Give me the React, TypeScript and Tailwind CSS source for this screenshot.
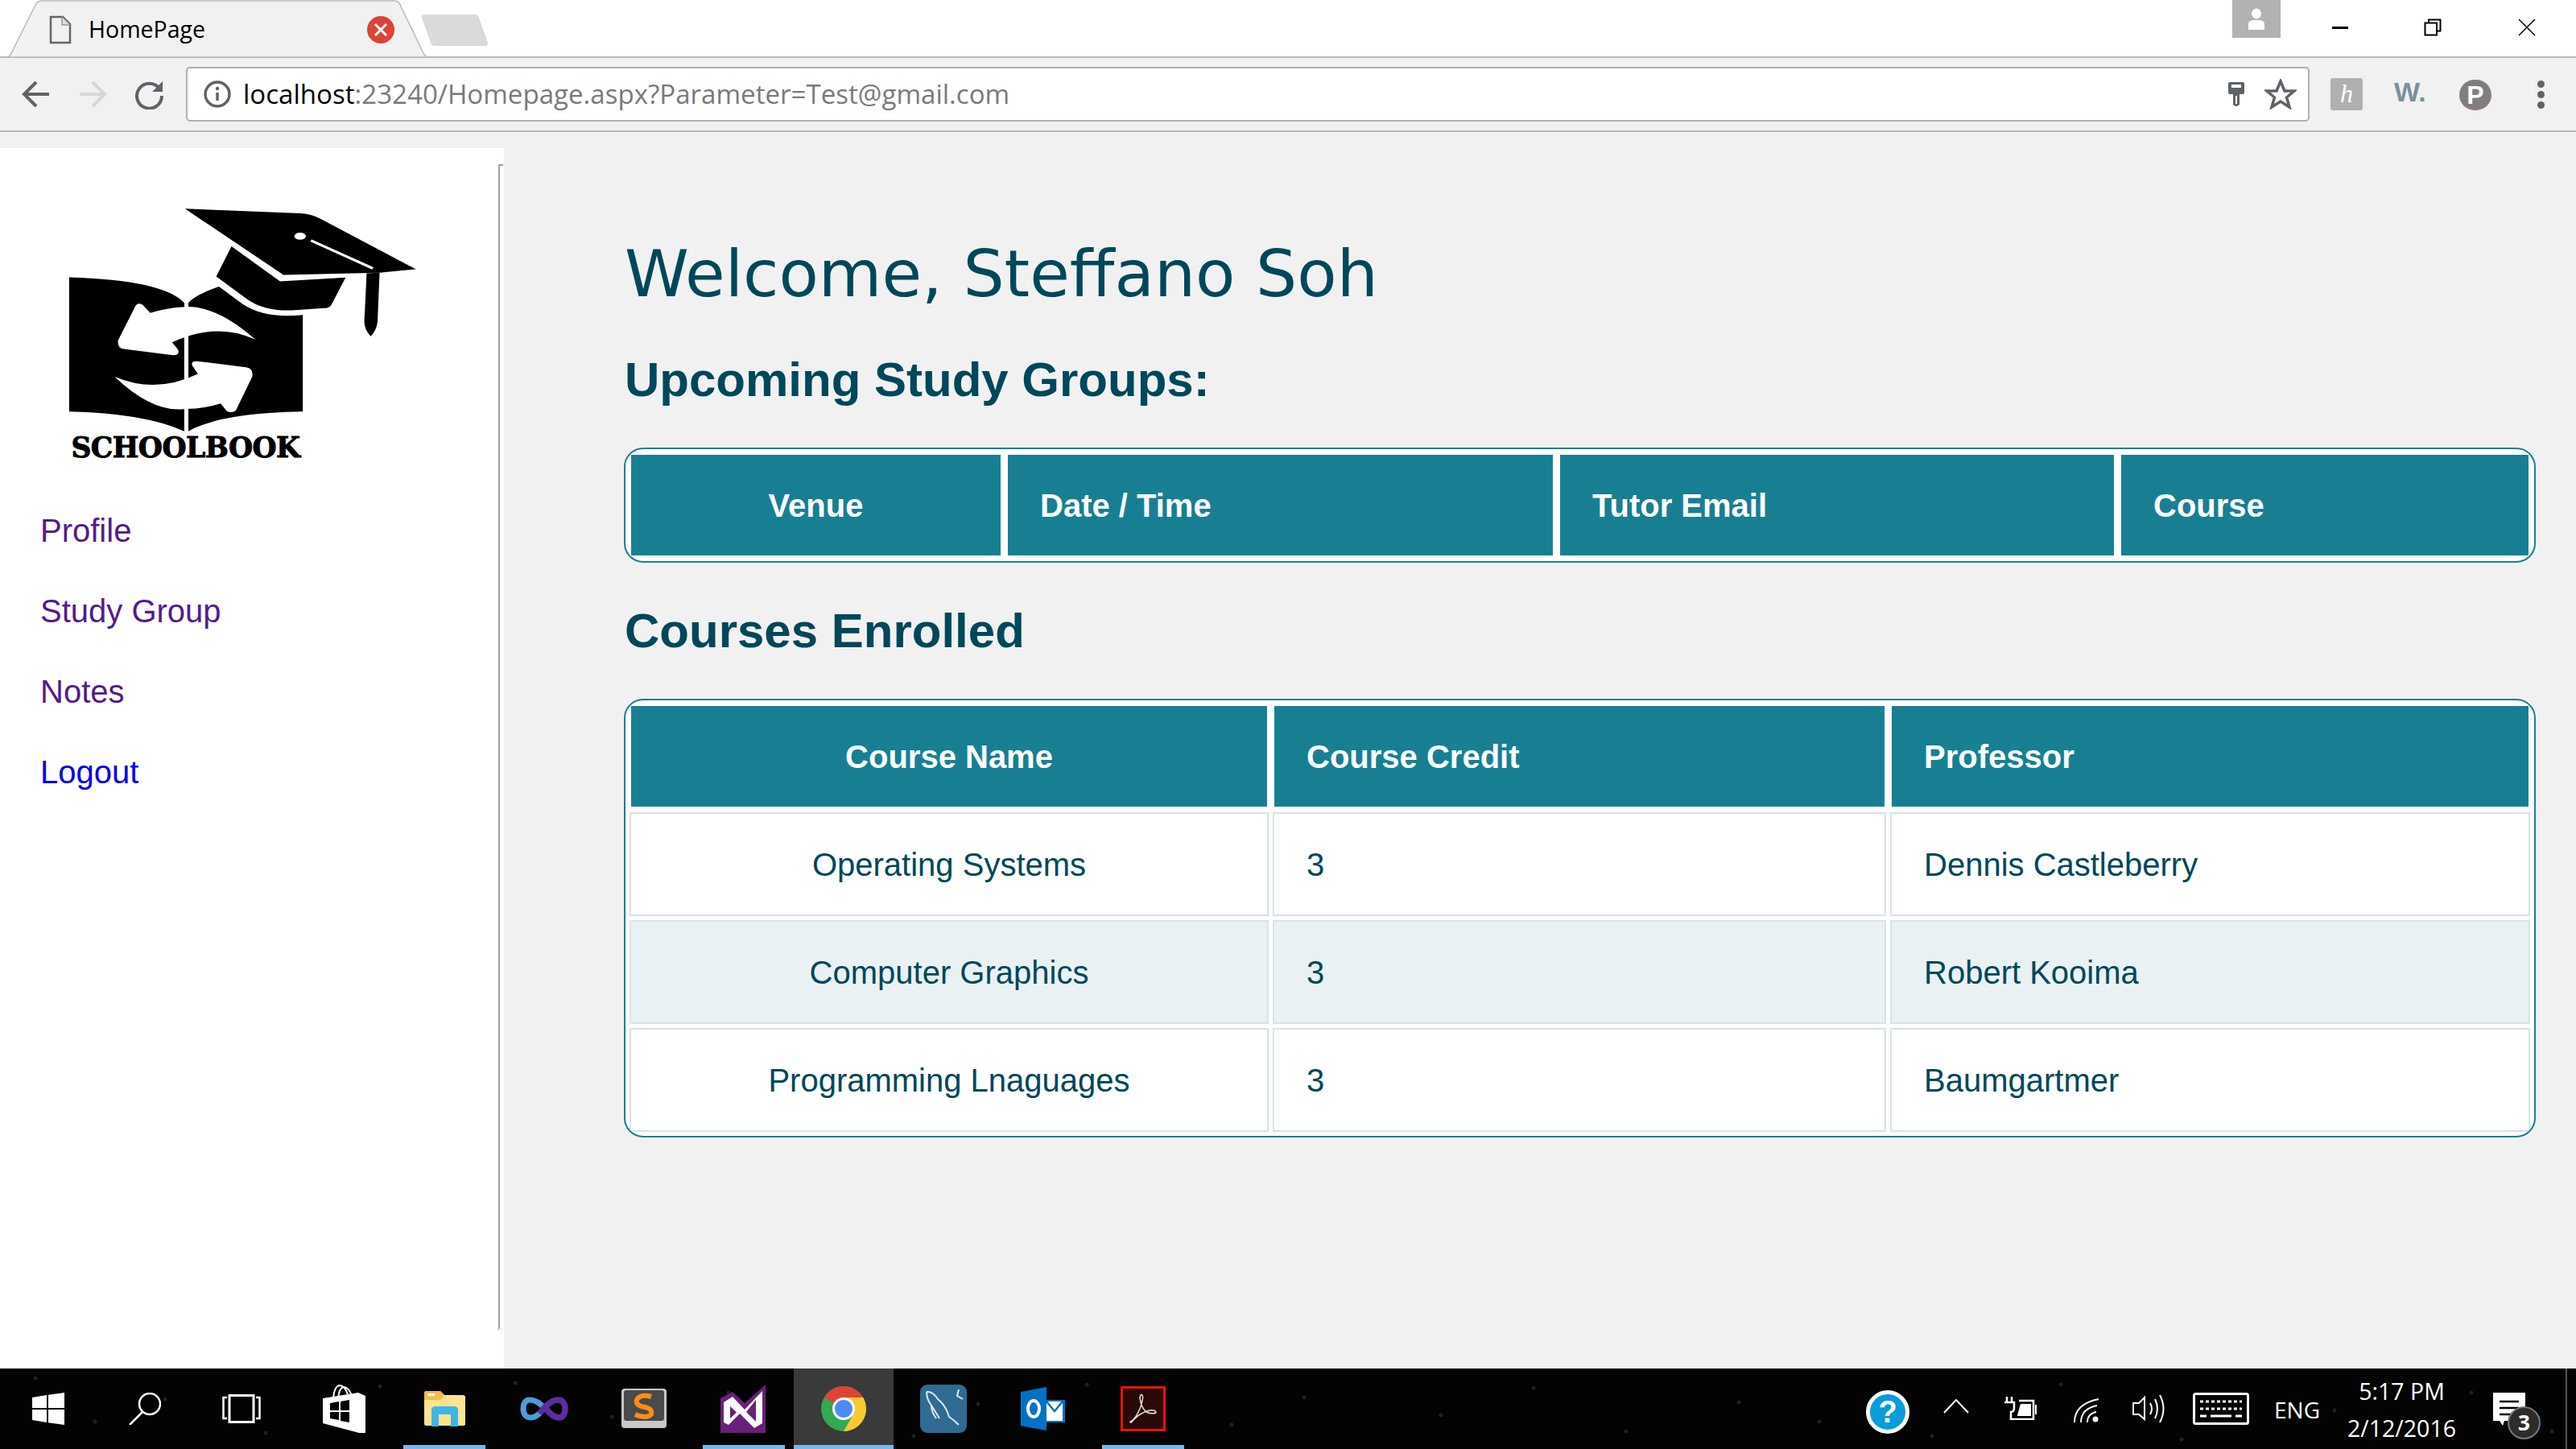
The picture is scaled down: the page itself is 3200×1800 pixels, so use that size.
const sans = "font-['Liberation_Sans',Arial,sans-serif]";

const groupCols = ["w-[463px]", "w-[681px]", "w-[692px]", "w-[510px]"];
const courseCols = ["w-[794px]", "w-[762px]", "w-[795px]"];

const courses = [
  { name: "Operating Systems", credit: "3", prof: "Dennis Castleberry" },
  { name: "Computer Graphics", credit: "3", prof: "Robert Kooima" },
  { name: "Programming Lnaguages", credit: "3", prof: "Baumgartmer" },
];

const stars = [
  [44, 12], [118, 66], [205, 38], [330, 80], [472, 22], [560, 72], [640, 18], [760, 60], [905, 30], [1135, 84],
  [1215, 44], [1350, 20], [1530, 70], [1620, 36], [1790, 58], [1905, 24], [2020, 78], [2160, 42], [2260, 66],
  [2400, 84], [2560, 20], [2710, 88], [2900, 52], [3070, 30], [3170, 78],
];

function Th({ children, center }: { children: string; center?: boolean }) {
  return (
    <th className={`h-[129px] p-0 px-10 border-2 border-white bg-[#187f93] text-white text-[40px] font-bold ${center ? "text-center" : "text-left"}`}>
      {children}
    </th>
  );
}

function Logo() {
  return (
    <svg width="443" height="282" viewBox="190 230 1050 845" preserveAspectRatio="none" className="block">
      <path d="M545 240 L885 257 Q920 260 945 278 L1225 465 L1118 478 L835 486 Z" fill="#000" />
      <path d="M916 358 L1098 462" stroke="#fff" strokeWidth="9" />
      <ellipse cx="884" cy="342" rx="17" ry="13" fill="#fff" />
      <path d="M1080 480 L1118 478 L1112 660 Q1110 690 1092 715 Q1073 690 1073 660 Z" fill="#000" />
      <path d="M682 380 L825 510 L1018 496 L975 600 Q968 610 955 610 L860 618 Q780 622 730 578 L637 492 Z" fill="#000" />
      <path d="M204 495 Q480 505 543 590 L543 1068 Q420 1000 204 995 Z" fill="#000" />
      <path d="M555 590 Q575 560 645 530 L715 595 Q780 650 892 635 L892 995 Q650 1000 555 1068 Z" fill="#000" />
      <path d="M752 727 Q640 600 545 605 Q490 608 443 628 L420 597 Q408 588 400 600 L348 730 Q345 758 365 762 L510 785 Q530 785 525 765 L507 737 Q640 660 752 727 Z" fill="#fff" />
      <path d="M338 865 Q450 1000 545 985 Q600 985 650 965 L668 993 Q685 1003 695 990 L743 865 Q748 835 725 830 L585 808 Q560 805 567 825 L583 855 Q460 930 338 865 Z" fill="#fff" />
      <path d="M543 720 H555 V1068 H543 Z" fill="#fff" />
    </svg>
  );
}

function Slot({ children, w = "w-[124px]", line, active, ml }: { children: React.ReactNode; w?: string; line?: boolean; active?: boolean; ml?: string }) {
  return (
    <div className={`relative h-full flex items-center justify-center ${w} ${ml ?? ""} ${active ? "bg-[#3a3a3a]" : ""}`}>
      {children}
      {line && <div className={`absolute bottom-0 h-[5px] bg-[#76b9ed] ${active ? "left-0 right-0" : "left-[11px] right-[11px]"}`} />}
    </div>
  );
}

export default function App() {
  return (
    <div className="w-[3200px] h-[1800px] flex flex-col overflow-hidden bg-[#f1f1f1]">
      {/* tab strip */}
      <div className="relative h-[72px] bg-white border-b-2 border-[#b8b8b8] shrink-0">
        <svg width="620" height="72" className="absolute left-0 top-0">
          <path d="M8 71 Q12 71 14 66 L43 8 Q46 1 52 1 L490 1 Q496 1 498 8 L526 66 Q528 71 534 71 Z" fill="#f1f1f1" stroke="#b8b8b8" strokeWidth="1.5" />
          <path d="M527 18 L590 18 Q594 18 595 22 L606 53 Q607 57 603 57 L540 57 Q536 57 535 53 L524 22 Q523 18 527 18 Z" fill="#dadada" />
          <path d="M63 21 H78 L87 30 V53 H63 Z" fill="none" stroke="#666" strokeWidth="2.5" />
          <path d="M77 21 V31 H87" fill="#ddd" stroke="#999" strokeWidth="1.5" />
          <circle cx="473" cy="37" r="17" fill="#db4437" />
          <path d="M466 30 L480 44 M480 30 L466 44" stroke="#fff" strokeWidth="3" />
        </svg>
        <span className="absolute left-[110px] top-[16px] text-[28.5px] leading-[40px] text-black font-['Open_Sans',sans-serif]">HomePage</span>
        <div className="absolute left-[2773px] top-0 w-[60px] h-[47px] bg-[#b2b2b2] flex items-center justify-center">
          <svg width="24" height="32" viewBox="0 0 24 32">
            <ellipse cx="12" cy="9" rx="6" ry="6.5" fill="#fff" />
            <path d="M2 29 V22 Q2 18 8 17 H16 Q22 18 22 22 V29 Z" fill="#fff" />
          </svg>
        </div>
        <div className="absolute left-[2897px] top-[33px] w-[20px] h-[3px] bg-black" />
        <svg width="22" height="22" className="absolute left-[3011px] top-[23px]">
          <path d="M6 5 V1.5 H20.5 V15.5 H16 M1.5 5.5 H16 V20.5 H1.5 Z" fill="none" stroke="#000" strokeWidth="2" />
        </svg>
        <svg width="22" height="22" className="absolute left-[3128px] top-[23px]">
          <path d="M1 1 L21 21 M21 1 L1 21" stroke="#000" strokeWidth="1.5" />
        </svg>
      </div>

      {/* toolbar */}
      <div className="h-[92px] bg-[#f1f1f1] border-b-2 border-[#b8b8b8] flex items-center shrink-0">
        <div className="w-[231px] flex items-center shrink-0">
          <svg width="36" height="36" viewBox="0 0 36 36" className="ml-[27px]">
            <path d="M34 18 H4 M18 3 L3 18 L18 33" fill="none" stroke="#5f6368" strokeWidth="4" />
          </svg>
          <svg width="36" height="36" viewBox="0 0 36 36" className="ml-[34px]">
            <path d="M2 18 H32 M18 3 L33 18 L18 33" fill="none" stroke="#d6d6d6" strokeWidth="4" />
          </svg>
          <svg width="38" height="38" viewBox="0 0 38 38" className="ml-[34px]">
            <path d="M31 12 A15.5 15.5 0 1 0 34 21" fill="none" stroke="#5f6368" strokeWidth="4" />
            <path d="M35 3 V16 H22 Z" fill="#5f6368" />
          </svg>
        </div>
        <div className="w-[2638px] h-[68px] bg-white border-2 border-[#b0b0b0] rounded-[5px] flex items-center shrink-0 pl-[19px] pr-[14px]">
          <svg width="36" height="36" viewBox="0 0 36 36" className="shrink-0">
            <circle cx="18" cy="18" r="15" fill="none" stroke="#5f6368" strokeWidth="3.5" />
            <path d="M18 16 V26" stroke="#5f6368" strokeWidth="3.5" />
            <circle cx="18" cy="11" r="2.2" fill="#5f6368" />
          </svg>
          <div className="ml-[14px] text-[33.1px] leading-[44px] text-[#7a7a7a] font-['Open_Sans',sans-serif] whitespace-nowrap flex-1">
            <span className="text-black">localhost</span>:23240/Homepage.aspx?Parameter=Test@gmail.com
          </div>
          <svg width="22" height="32" viewBox="0 0 22 32" className="shrink-0 ml-[2px]">
            <path d="M3 1 H19 Q21 1 21 3 V14 Q21 16 19 16 H15 V29 Q11 33 7 29 V16 H3 Q1 16 1 14 V3 Q1 1 3 1 Z" fill="#5f6368" />
            <rect x="5" y="4" width="12" height="4" fill="#fff" />
            <rect x="10" y="18" width="2" height="10" fill="#fff" />
          </svg>
          <svg width="40" height="38" viewBox="0 0 40 38" className="ml-[24px] shrink-0">
            <path d="M20 3 L25 15 L37 15 L27.5 23 L31 35 L20 28 L9 35 L12.5 23 L3 15 L15 15 Z" fill="none" stroke="#5f6368" strokeWidth="3.5" />
          </svg>
        </div>
        <div className="relative flex-1 h-full">
          <div className="absolute left-[26px] top-[25px] w-[40px] h-[40px] rounded-[3px] bg-[#b0b0b0] text-white text-[32px] leading-[38px] text-center italic font-['Liberation_Serif',serif]">h</div>
          <span className="absolute left-[105px] top-[22px] text-[34px] leading-[40px] font-bold text-[#7a909f] font-['Liberation_Sans',sans-serif]">W.</span>
          <div className="absolute left-[186px] top-[27px] w-[40px] h-[38px] rounded-full bg-[#7f7f7f] border-b border-[#c8608c] text-white text-[32px] leading-[38px] text-center font-bold font-['Liberation_Sans',sans-serif]">P</div>
          <div className="absolute left-[283px] top-[28px] flex flex-col gap-[4px]">
            <div className="w-[9px] h-[9px] rounded-full bg-[#5f6368]" />
            <div className="w-[9px] h-[9px] rounded-full bg-[#5f6368]" />
            <div className="w-[9px] h-[9px] rounded-full bg-[#5f6368]" />
          </div>
        </div>
      </div>

      {/* page */}
      <div className={`flex-1 min-h-0 pt-[20px] flex ${sans}`}>
        <aside className="w-[626px] bg-white pt-[20px] shrink-0">
          <div className="w-[621px] h-[1448px] border-r-2 border-[#a0a0a0] pt-[52px] pl-[80px] relative">
            <div className="absolute right-[-6px] top-0 w-[5px] h-[2px] bg-[#a0a0a0]" />
            <div className="absolute right-[-6px] bottom-0 w-[5px] h-[2px] bg-[#ececec]" />
            <Logo />
            <div className="-ml-[80px] w-[461px] text-center text-[34.5px] leading-[34px] mt-[1px] font-bold text-black font-['DejaVu_Serif',serif] [-webkit-text-stroke:1px_#000] tracking-[-0.5px]">
              SCHOOLBOOK
            </div>
            <nav className="-ml-[30px] mt-[63px] flex flex-col gap-[54px] text-[40px] leading-[46px]">
              <a className="text-[#551a8b]">Profile</a>
              <a className="text-[#551a8b]">Study Group</a>
              <a className="text-[#551a8b]">Notes</a>
              <a className="text-[#0000ee]">Logout</a>
            </nav>
          </div>
        </aside>

        <main className="flex-1 pl-[150px] pr-[50px] text-[#00475a]">
          <h1 className="mt-[108px] text-[80.7px] leading-[96px] font-['DejaVu_Sans',Verdana,sans-serif]">Welcome, Steffano Soh</h1>
          <h2 className="mt-[49px] text-[60px] leading-[70px] font-bold">Upcoming Study Groups:</h2>
          <div className="mt-[49px] -ml-[1px] rounded-[24px] border-2 border-[#187f93] bg-white overflow-hidden">
            <table className="table-fixed w-full border-separate border-spacing-[5px]">
              <colgroup>
                {groupCols.map((c) => <col key={c} className={c} />)}
              </colgroup>
              <thead>
                <tr>
                  <Th center>Venue</Th>
                  <Th>Date / Time</Th>
                  <Th>Tutor Email</Th>
                  <Th>Course</Th>
                </tr>
              </thead>
            </table>
          </div>
          <h2 className="mt-[50px] text-[60px] leading-[70px] font-bold">Courses Enrolled</h2>
          <div className="mt-[49px] -ml-[1px] rounded-[24px] border-2 border-[#187f93] bg-white overflow-hidden">
            <table className="table-fixed w-full border-separate border-spacing-[5px]">
              <colgroup>
                {courseCols.map((c) => <col key={c} className={c} />)}
              </colgroup>
              <thead>
                <tr>
                  <Th center>Course Name</Th>
                  <Th>Course Credit</Th>
                  <Th>Professor</Th>
                </tr>
              </thead>
              <tbody className="text-[40px]">
                {courses.map((c, i) => (
                  <tr key={c.name} className={i === 1 ? "bg-[#e9f1f3]" : ""}>
                    <td className="h-[129px] p-0 border-2 border-[#d8e4e6] text-center">{c.name}</td>
                    <td className="h-[129px] p-0 px-10 border-2 border-[#d8e4e6]">{c.credit}</td>
                    <td className="h-[129px] p-0 px-10 border-2 border-[#d8e4e6]">{c.prof}</td>
                  </tr>
                ))}
              </tbody>
            </table>
          </div>
        </main>
      </div>

      {/* taskbar */}
      <div className="relative h-[100px] bg-[#030303] shrink-0 flex font-['Open_Sans',sans-serif] text-white">
        <svg width="3200" height="100" className="absolute left-0 top-0">
          {stars.map(([x, y]) => <circle key={x} cx={x} cy={y} r="2.5" fill="#1c2226" />)}
        </svg>
        <Slot w="w-[120px]">
          <svg width="40" height="40" viewBox="0 0 40 40" className="relative">
            <path d="M0 6 L18 3 V19 H0 Z M20 2.7 L40 0 V19 H20 Z M0 21 H18 V37 L0 34 Z M20 21 H40 V40 L20 37.3 Z" fill="#fff" />
          </svg>
        </Slot>
        <Slot w="w-[120px]">
          <svg width="40" height="40" viewBox="0 0 40 40" className="relative">
            <ellipse cx="26" cy="14" rx="13" ry="13" fill="none" stroke="#fff" strokeWidth="2.5" />
            <path d="M17 24 L1 40" stroke="#fff" strokeWidth="2.5" />
          </svg>
        </Slot>
        <Slot w="w-[120px]">
          <svg width="48" height="36" viewBox="0 0 48 36" className="relative">
            <rect x="9" y="1.5" width="30" height="33" fill="none" stroke="#fff" strokeWidth="3" />
            <path d="M6 4 H1.5 V30 H6 M42 4 H46.5 V30 H42" fill="none" stroke="#fff" strokeWidth="2.5" />
          </svg>
        </Slot>
        <Slot ml="ml-[6px]">
          <svg width="56" height="60" viewBox="0 0 56 60" className="relative">
            <path d="M14 18 Q15 2 22 1 Q28 1 32 12 M20 18 Q21 4 27 3 Q33 3 37 14" fill="none" stroke="#fff" strokeWidth="2" />
            <path d="M1 17 L45 10 L54 14 V60 L46 60 L1 48 Z" fill="#fff" />
            <path d="M10 23 L21 21 V32 H10 Z M23 21 L34 19 V32 H23 Z M10 34 H21 V44 L10 42 Z M23 34 H34 V47 L23 45 Z" fill="#000" />
          </svg>
        </Slot>
        <Slot line>
          <svg width="52" height="44" viewBox="0 0 52 44" className="relative">
            <path d="M1 3 Q1 0 4 0 H21 L26 5 H49 Q52 5 52 8 V41 Q52 43 49 43 H3 Q1 43 1 41 Z" fill="#ffe38e" />
            <path d="M1 3 Q1 0 4 0 H21 L26 5 L21 11 H1 Z" fill="#f5bd4b" />
            <rect x="5" y="3" width="9" height="3" fill="#fff" />
            <path d="M10 44 V24 Q10 19 15 19 H38 Q43 19 43 24 V44 H34 V29 H19 V44 Z" fill="#3db5e8" />
          </svg>
        </Slot>
        <Slot>
          <svg width="60" height="30" viewBox="0 0 60 30" className="relative">
            <path d="M31 15 C25 8 19 4 12 4 C6 4 4 10 4 15 C4 21 7 26 13 26 C17 26 21 24 25 20" fill="none" stroke="#4a9fd8" strokeWidth="7" />
            <path d="M24 21 C31 12 39 4 47 4 C54 4 56 10 56 15 C56 21 54 26 48 26 C42 26 37 21 32 15" fill="none" stroke="#5b2da0" strokeWidth="7.5" />
          </svg>
        </Slot>
        <Slot>
          <svg width="58" height="50" viewBox="0 0 58 50" className="relative">
            <rect x="1" y="0" width="56" height="49" rx="4" fill="#c8c8c8" />
            <rect x="4" y="2" width="50" height="38" rx="3" fill="#4a4a4a" />
            <path d="M38 10 Q24 6 20 14 Q18 21 30 23 Q40 25 38 32 Q32 38 18 32" fill="none" stroke="#ff8c1a" strokeWidth="6" />
          </svg>
        </Slot>
        <Slot line>
          <svg width="58" height="60" viewBox="0 0 58 60" className="relative">
            <path d="M0 60 V17 L15 9 L30 23 L56 0 V60 Z" fill="#68217a" />
            <path d="M4 22 L15 15 L30 31 L52 8 V48 L42 54 L24 36 L10 50 L4 47 Z" fill="#fff" />
            <path d="M12 27 V42 L20 34.5 Z M44 19 L32 34 L44 46 Z" fill="#68217a" />
          </svg>
        </Slot>
        <Slot active line>
          <svg width="56" height="56" viewBox="0 0 56 56" className="relative">
            <circle cx="28" cy="28" r="28" fill="#34a853" />
            <path d="M28 0 A28 28 0 0 1 52.2 14 L28 14 A14 14 0 0 0 15.9 21 L3.8 14 A28 28 0 0 1 28 0 Z" fill="#db4437" />
            <path d="M52.2 14 A28 28 0 0 1 28 56 L40 35 A14 14 0 0 0 40 21 L28 14 Z" fill="#fcc934" />
            <circle cx="28" cy="28" r="14" fill="#fff" />
            <circle cx="28" cy="28" r="11" fill="#4e8cf5" />
          </svg>
        </Slot>
        <Slot>
          <svg width="58" height="60" viewBox="0 0 58 60" className="relative">
            <rect width="58" height="60" rx="9" fill="#2f6b92" />
            <path d="M8 9 Q16 8 22 18 Q32 26 36 40 Q42 44 48 50 M8 9 Q8 18 14 26 Q14 34 20 42 M14 26 Q18 32 24 42 M48 6 L46 14 L53 18" fill="none" stroke="#dfe8ee" strokeWidth="2" />
          </svg>
        </Slot>
        <Slot>
          <svg width="56" height="54" viewBox="0 0 56 54" className="relative">
            <path d="M32 16 H55 V44 H32 Z" fill="#0072c6" />
            <path d="M32 18 H52 V42 H32 Z" fill="#fff" />
            <path d="M32 18 L42 30 L52 18" fill="none" stroke="#0072c6" strokeWidth="2.5" />
            <path d="M0 6 L32 0 V54 L0 48 Z" fill="#0072c6" />
            <ellipse cx="16" cy="27" rx="7" ry="10" fill="none" stroke="#fff" strokeWidth="4" />
          </svg>
        </Slot>
        <Slot line>
          <svg width="56" height="56" viewBox="0 0 56 56" className="relative">
            <rect x="1.5" y="1.5" width="53" height="53" fill="#2a0a08" stroke="#e8140c" strokeWidth="3" />
            <path d="M12 44 Q18 42 24 28 Q29 14 27 11 Q25 9 24 14 Q25 26 32 32 Q38 35 44 33 Q44 29 36 30 Q24 33 16 42 Q12 47 12 44 Z" fill="none" stroke="#e8e0dc" strokeWidth="1.5" />
          </svg>
        </Slot>

        <div className="absolute left-[2318px] top-[27px] w-[54px] h-[54px] rounded-full bg-[#089cd9] border-[5px] border-white text-center text-[38px] leading-[44px] font-bold font-['Liberation_Sans',sans-serif]">?</div>
        <svg width="32" height="18" className="absolute left-[2414px] top-[38px]">
          <path d="M1 17 L16 1 L31 17" fill="none" stroke="#fff" strokeWidth="2" />
        </svg>
        <svg width="42" height="30" className="absolute left-[2488px] top-[34px]">
          <path d="M5 1 V8 M11 1 V8 M2 8 H14 V15 Q14 20 10 20 V29 H38 V6 H20" fill="none" stroke="#fff" strokeWidth="2.5" />
          <path d="M18 24 L22 10 H35 V25 H18 Z" fill="#fff" />
          <rect x="40" y="11" width="2" height="12" fill="#fff" />
        </svg>
        <svg width="34" height="32" className="absolute left-[2575px] top-[36px]">
          <path d="M2 31 Q2 8 32 2 M10 31 Q10 14 30 10 M18 31 Q18 20 29 18" fill="none" stroke="#fff" strokeWidth="1.8" />
          <circle cx="28" cy="27" r="3.5" fill="#fff" />
        </svg>
        <svg width="42" height="38" className="absolute left-[2649px] top-[31px]">
          <path d="M1 12 H8 L15 5 V32 L8 26 H1 Z" fill="none" stroke="#fff" strokeWidth="2" />
          <path d="M22 12 Q26 19 22 26 M28 7 Q34 19 28 31 M34 2 Q43 19 34 36" fill="none" stroke="#fff" strokeWidth="2" />
        </svg>
        <svg width="70" height="40" className="absolute left-[2724px] top-[30px]">
          <rect x="1.5" y="1.5" width="67" height="37" rx="2" fill="none" stroke="#fff" strokeWidth="3" />
          <path d="M9 11 H61 M9 20 H61" stroke="#fff" strokeWidth="3" strokeDasharray="4 3" />
          <path d="M9 29 H17 M22 29 H48 M53 29 H61" stroke="#fff" strokeWidth="3" />
        </svg>
        <span className="absolute left-[2825px] top-[33px] text-[28px] leading-[36px]">ENG</span>
        <div className="absolute left-[2900px] top-[5px] w-[167px] flex flex-col items-center text-[28.5px] leading-[46px]">
          <span>5:17 PM</span>
          <span>2/12/2016</span>
        </div>
        <svg width="42" height="44" className="absolute left-[3097px] top-[29px]">
          <path d="M0 1 H40 V36 H14 L12 42 L8 36 H0 Z" fill="#fff" />
          <path d="M8 12 H32 M8 20 H32 M8 28 H24" stroke="#000" strokeWidth="2.5" />
        </svg>
        <div className="absolute left-[3115px] top-[47px] w-[41px] h-[41px] rounded-full bg-[#2c2c2c] border-2 border-[#777] text-center text-[26px] leading-[36px] font-bold">3</div>
        <div className="absolute left-[3187px] top-0 w-[2px] h-full bg-[#555]" />
      </div>
    </div>
  );
}
